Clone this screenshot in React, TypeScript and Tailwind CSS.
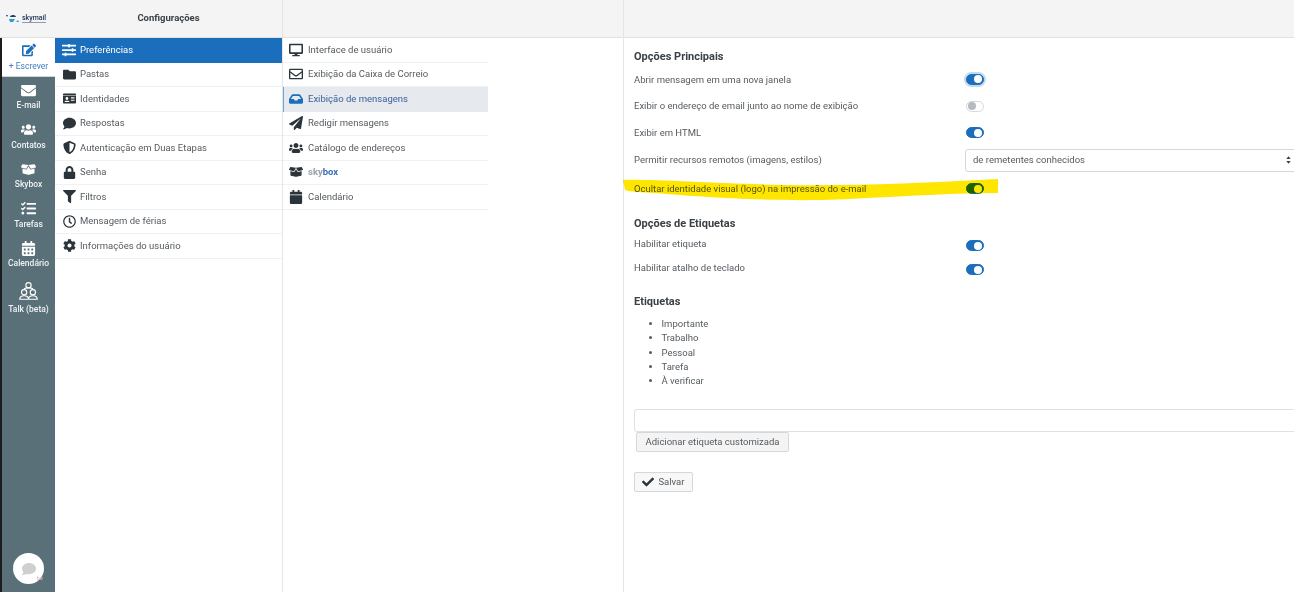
import React from 'react';
import {
  FaBoxOpen,
  FaCalendar,
  FaCalendarAlt,
  FaCheck,
  FaCog,
  FaComment,
  FaDesktop,
  FaEdit,
  FaEnvelope,
  FaFilter,
  FaFolder,
  FaIdCard,
  FaInbox,
  FaLock,
  FaPaperPlane,
  FaRegClock,
  FaRegEnvelope,
  FaShieldAlt,
  FaSlidersH,
  FaTasks,
  FaUsers,
} from 'react-icons/fa';

const font = { fontFamily: 'Roboto, sans-serif' };

const railItems = [
  { label: 'E-mail', icon: FaEnvelope },
  { label: 'Contatos', icon: FaUsers },
  { label: 'Skybox', icon: FaBoxOpen },
  { label: 'Tarefas', icon: FaTasks },
  { label: 'Calendário', icon: FaCalendarAlt },
];

const settings = [
  { label: 'Pastas', icon: FaFolder },
  { label: 'Identidades', icon: FaIdCard },
  { label: 'Respostas', icon: FaComment },
  { label: 'Autenticação em Duas Etapas', icon: FaShieldAlt },
  { label: 'Senha', icon: FaLock },
  { label: 'Filtros', icon: FaFilter },
  { label: 'Mensagem de férias', icon: FaRegClock },
  { label: 'Informações do usuário', icon: FaCog },
];

const Toggle = ({ on = true, focus = false, className = '' }: { on?: boolean; focus?: boolean; className?: string }) => (
  <span
    className={`flex h-[11px] w-[18px] items-center rounded-full border ${
      on ? 'justify-end border-[#1b6ebb] bg-[#1b6ebb]' : 'justify-start border-[#d5d8db] bg-white'
    } ${focus ? 'shadow-[0_0_0_2px_#c5d9ee]' : ''} ${className}`}
  >
    <span className={`h-[8px] w-[8px] rounded-full ${on ? 'mr-px bg-white' : 'ml-px bg-[#b4bac0]'}`} />
  </span>
);

const OptionRow = ({ label, className, children }: { label: string; className: string; children: React.ReactNode }) => (
  <div className={`flex ${className}`}>
    <span className="w-[332px] shrink-0">{label}</span>
    {children}
  </div>
);

const RailIcon = ({ label, icon: Icon }: { label: string; icon: React.ElementType }) => (
  <div className="flex h-[39.5px] flex-col items-center gap-[3px] pt-[6px]">
    <span className="flex h-[14px] items-center text-[15px] text-white">
      <Icon />
    </span>
    <span className="text-[8.5px] leading-[11px] font-medium tracking-normal text-[#eef2f4]">{label}</span>
  </div>
);

const SubRow = ({ icon: Icon, children }: { icon: React.ElementType; children: React.ReactNode }) => (
  <div className="flex h-[24.5px] items-center gap-[5px] border-b border-[#f0f1f2] pl-[6px]">
    <Icon className="w-[14px] text-[14px] text-[#2b343b]" />
    <span>{children}</span>
  </div>
);

export default function App() {
  return (
    <div className="flex h-[592px] w-[1294px] flex-col overflow-hidden bg-white text-[9.5px] text-[#555b60]" style={font}>
      {/* Top bar */}
      <div className="flex h-[38px] shrink-0 border-b border-[#dfe1e3] bg-[#f4f4f4]">
        <div className="flex w-[55px] items-center pl-[5px]">
          <svg viewBox="0 0 16 10" className="h-[10px] w-[16px]">
            <path d="M1 1h2L2 3z" fill="#1a3f6b" />
            <path d="M5 3c0-2 5-3 6 0z" fill="#1a3f6b" />
            <path d="M4 5h6L8 8H5z" fill="#2f9ad6" />
            <path d="M11 8l2-2 1 2z" fill="#2f9ad6" />
          </svg>
          <span className="ml-px border-b border-[#8d9bab] text-[7px] leading-[8px] font-medium text-[#1a3552]">skymail</span>
        </div>
        <div className="flex w-[228px] items-center justify-center border-r border-[#e3e5e7] pb-px text-[9.5px] font-bold text-[#3a4045]">
          Configurações
        </div>
        <div className="w-[341px] border-r border-[#e3e5e7]" />
      </div>

      <div className="flex min-h-0 flex-1">
        {/* Icon rail */}
        <div className="relative flex w-[55px] shrink-0 flex-col border-l-2 border-[#1c1c1c] bg-[#5a7078]">
          <div className="flex h-[39px] flex-col items-center gap-[3.5px] border-b border-[#cfd6da] bg-white pt-[5px]">
            <FaEdit className="text-[14px] text-[#1b6ebb]" />
            <span className="text-[8.5px] leading-[11px] text-[#3f7fbf]">+ Escrever</span>
          </div>
          {railItems.map((item) => (
            <RailIcon key={item.label} {...item} />
          ))}
          <div className="flex flex-col items-center gap-[3px] pt-[5px]">
            <svg viewBox="0 0 24 24" className="h-[21px] w-[21px]" fill="none" stroke="#fff" strokeWidth="1.3">
              <circle cx="12" cy="6" r="3" />
              <circle cx="7" cy="14" r="3" />
              <circle cx="17" cy="14" r="3" />
              <path d="M2 22c0-3 2-4 5-4s5 1 5 4zM12 22c0-3 2-4 5-4s5 1 5 4zM7 11c0-2 2-2 5-2s5 0 5 2" />
            </svg>
            <span className="text-[8.5px] leading-[11px] font-medium text-[#eef2f4]">Talk (beta)</span>
          </div>
          <div className="absolute bottom-[8px] left-[11px] flex h-[31px] w-[31px] items-center justify-center rounded-full bg-white">
            <FaComment className="text-[14px] text-[#cfcfcf]" />
            <span className="absolute right-[1px] bottom-[3px] text-[6px] leading-none text-[#e3b6b6]">be</span>
          </div>
        </div>

        {/* Settings sections */}
        <div className="w-[228px] shrink-0 border-r border-[#e3e5e7]">
          <div className="flex h-[24.5px] items-center gap-[4px] bg-[#1b6ebb] pl-[7px] text-white">
            <FaSlidersH className="w-[14px] text-[14px]" />
            <span>Preferências</span>
          </div>
          {settings.map(({ label, icon: Icon }) => (
            <div key={label} className="flex h-[24.5px] items-center gap-[4px] border-b border-[#f0f1f2] pl-[7px]">
              <span className="flex w-[14px] justify-center text-[13px] text-[#2b343b]">
                <Icon />
              </span>
              <span>{label}</span>
            </div>
          ))}
        </div>

        {/* Preference groups */}
        <div className="w-[341px] shrink-0 border-r border-[#e3e5e7]">
          <div className="w-[205px] pt-[0.2px]">
            <SubRow icon={FaDesktop}>Interface de usuário</SubRow>
            <SubRow icon={FaRegEnvelope}>Exibição da Caixa de Correio</SubRow>
            <div className="flex h-[24.5px] items-center gap-[5px] border-l border-[#6aa5dc] bg-[#e6e9ed] pl-[5px] text-[#39629c]">
              <FaInbox className="w-[14px] text-[14px] text-[#1b6ebb]" />
              <span>Exibição de mensagens</span>
            </div>
            <SubRow icon={FaPaperPlane}>Redigir mensagens</SubRow>
            <SubRow icon={FaUsers}>Catálogo de endereços</SubRow>
            <SubRow icon={FaBoxOpen}>
              <span className="font-bold text-[#9aa3ad]">sky</span>
              <span className="font-bold text-[#3f6fb5]">box</span>
            </SubRow>
            <SubRow icon={FaCalendar}>Calendário</SubRow>
          </div>
        </div>

        {/* Options form */}
        <div className="min-w-0 flex-1 pl-[10px]">
          <h2 className="mt-[12px] text-[11px] leading-[14px] font-bold text-[#3a4045]">Opções Principais</h2>
          <OptionRow label="Abrir mensagem em uma nova janela" className="mt-[9px] h-[14px] items-center">
            <Toggle focus className="-mt-[2px]" />
          </OptionRow>
          <OptionRow label="Exibir o endereço de email junto ao nome de exibição" className="mt-[12px] h-[14px] items-center">
            <Toggle on={false} />
          </OptionRow>
          <OptionRow label="Exibir em HTML" className="mt-[13px] h-[14px] items-center">
            <Toggle className="-mt-[1px]" />
          </OptionRow>
          <OptionRow label="Permitir recursos remotos (imagens, estilos)" className="mt-[8px] h-[24px] items-center">
            <div className="-mr-[4px] ml-[-1px] flex h-[23px] flex-1 items-center justify-between rounded-[3px] border border-[#d5d8db] pr-[6px] pl-[7px]">
              <span>de remetentes conhecidos</span>
              <svg viewBox="0 0 8 12" className="h-[8px] w-[5px]" fill="#3a4045">
                <path d="M4 0l3.5 4.5h-7zM4 12L.5 7.5h7z" />
              </svg>
            </div>
          </OptionRow>
          <OptionRow label="Ocultar identidade visual (logo) na impressão do e-mail" className="mt-[10px] h-[14px] items-center">
            <Toggle className="-mt-[1px]" />
          </OptionRow>

          <h2 className="mt-[21px] text-[11px] leading-[14px] font-bold text-[#3a4045]">Opções de Etiquetas</h2>
          <OptionRow label="Habilitar etiqueta" className="mt-[6px] h-[14px] items-start">
            <Toggle className="mt-[3px]" />
          </OptionRow>
          <OptionRow label="Habilitar atalho de teclado" className="mt-[10px] h-[14px] items-start">
            <Toggle className="mt-[3px]" />
          </OptionRow>

          <h2 className="mt-[20px] text-[11px] leading-[14px] font-bold text-[#3a4045]">Etiquetas</h2>
          <ul className="mt-[8px] list-disc pl-[27.5px] leading-[14.25px]">
            <li>Importante</li>
            <li>Trabalho</li>
            <li>Pessoal</li>
            <li>Tarefa</li>
            <li>À verificar</li>
          </ul>

          <div className="mt-[21px] -mr-[4px] h-[23px] rounded-l-[3px] border border-[#dfe1e3] bg-white" />
          <button className="ml-[2px] flex h-[20px] w-[153px] items-center justify-center rounded-[2px] border border-[#d5d8db] bg-[#f4f4f4] whitespace-nowrap text-[#555b60]">
            Adicionar etiqueta customizada
          </button>
          <button className="mt-[20px] flex h-[20px] w-[59px] items-center justify-center gap-[4px] rounded-[2px] border border-[#d5d8db] bg-[#f8f8f8] text-[#555b60]">
            <FaCheck className="text-[12px] text-[#2b343b]" />
            Salvar
          </button>
        </div>
      </div>

      {/* Hand-drawn yellow marker over the row */}
      <svg className="pointer-events-none absolute top-[178px] left-[622px] h-[24px] w-[378px] mix-blend-multiply" viewBox="0 0 378 24">
        <path
          d="M1 2C30 1 100 6 165 7C230 8 300 5 376 1L376 15C320 15 260 20 200 22C130 23 70 18 32 15C20 14 8 14 3 12Z"
          fill="#ffe600"
        />
      </svg>
    </div>
  );
}
